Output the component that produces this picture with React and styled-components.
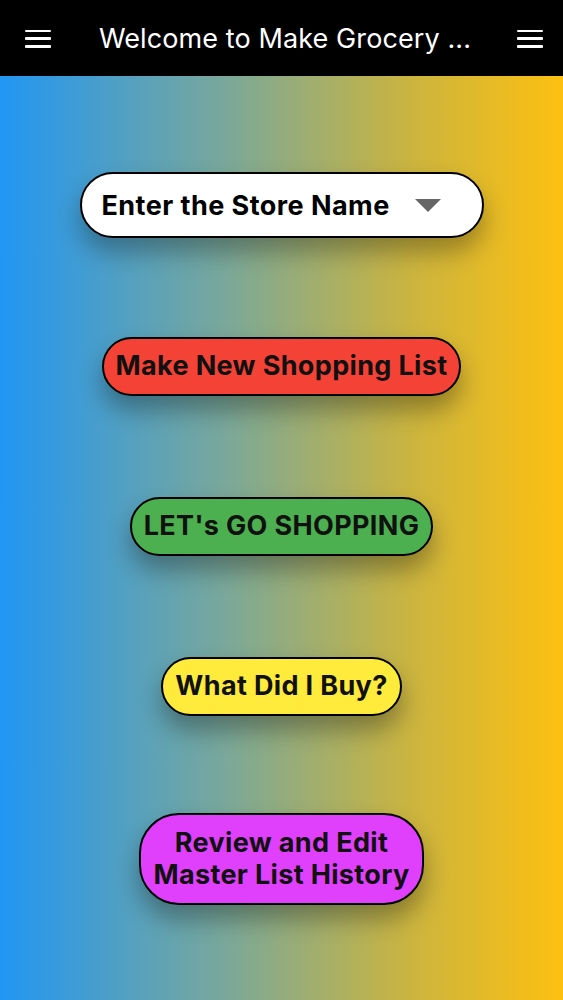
import React from "react";
import styled, { createGlobalStyle } from "styled-components";

const Global = createGlobalStyle`
  html, body { margin: 0; padding: 0; }
  body { font-family: "Inter", "Liberation Sans", sans-serif; }
`;

const Page = styled.div`
  width: 563px;
  height: 1000px;
  display: flex;
  flex-direction: column;
  overflow: hidden;
`;

const Header = styled.header`
  height: 76px;
  background: #000;
  display: flex;
  align-items: center;
  justify-content: space-between;
  padding: 0 20px 0 25px;
  box-sizing: border-box;
`;

const Title = styled.h1`
  margin: 0;
  color: #fff;
  font-size: 27px;
  font-weight: 400;
  letter-spacing: 0.1px;
  flex: 1;
  text-align: center;
  padding-left: 2px;
  white-space: nowrap;
`;

const MenuBtn = styled.div`
  width: 26px;
  height: 18px;
  display: flex;
  flex-direction: column;
  justify-content: space-between;
  margin-top: 1px;
  & > span {
    height: 2.5px;
    background: #fff;
    border-radius: 1px;
  }
`;

const Body = styled.main`
  flex: 1;
  background: linear-gradient(90deg, #2196f3 0%, #7aa89a 40%, #c9b441 72%, #fdc010 100%);
  display: flex;
  flex-direction: column;
  align-items: center;
  padding-top: 96px;
  gap: 99px;
`;

const Select = styled.div`
  width: 404px;
  height: 66px;
  box-sizing: border-box;
  border: 2.5px solid #000;
  border-radius: 33px;
  background: #fff;
  display: flex;
  align-items: center;
  padding-left: 20px;
  gap: 25px;
  box-shadow: 0 14px 24px rgba(0, 0, 0, 0.3);
  font-size: 27px;
  font-weight: 700;
  letter-spacing: 0.45px;
  color: #000;
`;

const Caret = styled.span`
  width: 0;
  height: 0;
  border-left: 13px solid transparent;
  border-right: 13px solid transparent;
  border-top: 13px solid #666;
`;

const Pill = styled.button`
  background: ${(p) => p.$bg};
  border: 2.5px solid #000;
  border-radius: 40px;
  padding: ${(p) => (p.$multi ? "12px 12px" : "11px 12px 12px")};
  font-family: "Inter", "Liberation Sans", sans-serif;
  font-size: 27px;
  font-weight: 700;
  letter-spacing: 0.35px;
  line-height: 32px;
  color: #111;
  text-align: center;
  box-shadow: 0 14px 24px rgba(0, 0, 0, 0.32);
  margin-top: ${(p) => p.$mt || 0}px;
`;

export default function App() {
  return (
    <Page>
      <Global />
      <Header>
        <MenuBtn><span /><span /><span /></MenuBtn>
        <Title>Welcome to Make Grocery ...</Title>
        <MenuBtn><span /><span /><span /></MenuBtn>
      </Header>
      <Body>
        <Select>
          Enter the Store Name
          <Caret />
        </Select>
        <Pill $bg="#f44336">Make New Shopping List</Pill>
        <Pill $bg="#4caf50" $mt={2}>LET's GO SHOPPING</Pill>
        <Pill $bg="#ffeb3b" $mt={2}>What Did I Buy?</Pill>
        <Pill $bg="#e040fb" $multi $mt={-2}>Review and Edit<br />Master List History</Pill>
      </Body>
    </Page>
  );
}
